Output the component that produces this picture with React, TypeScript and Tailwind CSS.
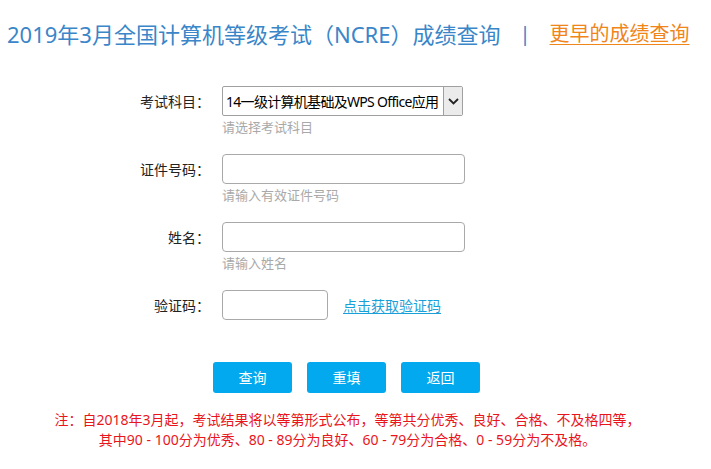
import { useState } from 'react';

const font = { fontFamily: '"Noto Sans", "Noto Sans CJK SC", sans-serif' };

function Field({ label, hint, children }: { label: string; hint?: string; children: React.ReactNode }) {
    return (
        <div className="flex">
            <div className="w-[222px] h-[30px] flex items-center justify-end pr-[12px] text-[14px] text-[#222]">{label}</div>
            <div className="flex flex-col">
                {children}
                {hint && <div className="mt-[2px] h-[18px] leading-[18px] text-[13px] text-[#a9a9a9]">{hint}</div>}
            </div>
        </div>
    );
}

export default function App() {
    const [subject, setSubject] = useState('14');

    return (
        <div className="w-[711px] h-[469px] bg-white overflow-hidden" style={font}>
            {/* Header */}
            <div className="flex items-center pl-[7px] pt-[18px] h-[50px] leading-[30px]">
                <span className="text-[22px] text-[#3a86c8]">2019年3月全国计算机等级考试（NCRE）成绩查询</span>
                <span className="ml-[19px] text-[20px] text-[#3a86c8]">|</span>
                <a href="#" className="ml-[19px] text-[20px] text-[#f08519] underline underline-offset-[3px] decoration-1">更早的成绩查询</a>
            </div>

            {/* Form */}
            <div className="mt-[36px] flex flex-col gap-[18px]">
                <Field label="考试科目：" hint="请选择考试科目">
                    <div className="relative w-[241px] h-[30px]">
                        <select
                            value={subject}
                            onChange={(e) => setSubject(e.target.value)}
                            className="appearance-none w-full h-full border border-[#a0a0a0] rounded-[2px] pl-[3px] pr-[20px] text-[14px] tracking-[-0.7px] text-black bg-white"
                            style={font}
                        >
                            <option value="14">14一级计算机基础及WPS Office应用</option>
                        </select>
                        <div className="absolute right-[1px] top-[1px] bottom-[1px] w-[19px] bg-[#ebebeb] border-l border-[#a0a0a0] flex items-center justify-center pointer-events-none">
                            <svg width="11" height="7" viewBox="0 0 11 7" fill="none">
                                <path d="M1 1l4.5 4.5L10 1" stroke="#222" strokeWidth="1.8" />
                            </svg>
                        </div>
                    </div>
                </Field>
                <Field label="证件号码：" hint="请输入有效证件号码">
                    <input className="w-[243px] h-[30px] border border-[#a9a9a9] rounded-[4px] px-2 text-[14px] outline-none" />
                </Field>
                <Field label="姓名：" hint="请输入姓名">
                    <input className="w-[243px] h-[30px] border border-[#a9a9a9] rounded-[4px] px-2 text-[14px] outline-none" />
                </Field>
                <Field label="验证码：">
                    <div className="flex items-center">
                        <input className="w-[106px] h-[30px] border border-[#a9a9a9] rounded-[4px] px-2 text-[14px] outline-none" />
                        <a href="#" className="ml-[15px] text-[14px] text-[#1aa0d8] underline underline-offset-2">点击获取验证码</a>
                    </div>
                </Field>
            </div>

            {/* Buttons */}
            <div className="mt-[42px] flex pl-[213px] gap-[15px]">
                {['查询', '重填', '返回'].map((t) => (
                    <button key={t} className="w-[79px] h-[31px] rounded-[3px] bg-[#03a9ee] text-white text-[14px]">{t}</button>
                ))}
            </div>

            {/* Note */}
            <div className="mt-[17px] text-center text-[14px] leading-[20px] text-[#e8161c]">
                <div className="pr-[16px]">注：自2018年3月起，考试结果将以等第形式公布，等第共分优秀、良好、合格、不及格四等，</div>
                <div className="pr-[16px]">其中90 - 100分为优秀、80 - 89分为良好、60 - 79分为合格、0 - 59分为不及格。</div>
            </div>
        </div>
    );
}
